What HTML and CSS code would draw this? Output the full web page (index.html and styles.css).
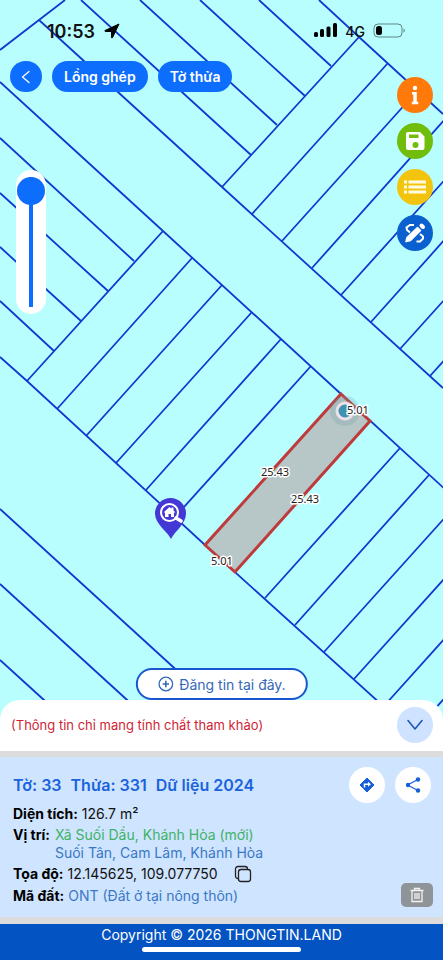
FILE: index.html
```html
<!DOCTYPE html>
<html lang="vi">
<head>
  <meta charset="UTF-8" />
  <meta name="viewport" content="width=device-width, initial-scale=1" />
  <title>Thông tin thửa đất</title>
  <link rel="stylesheet" href="styles.css">
</head>
<body>

  <main class="map">
    <svg class="map-canvas" viewBox="0 0 443 720" preserveAspectRatio="xMidYMin slice">
      <!-- block edges -->
      <g class="lines">
        <path d="M0 50L65 0M39 20L222 187L443 388" />
        <path d="M319 0L359 37L443 114M359 37L222 187" />
        <path d="M0 82L163 231L341 394L459 502M163 231L27 381" />
        <path d="M0 357L27 381L205 545L413 733" />
        <path d="M0 509L206 697M0 584L137 709M0 660L55 710" />
      </g>
      <!-- parcels -->
      <g class="lines">
        <path d="M81 0L251 155M140 0L277 125M200 0L305 96M259 0L331 66" />
        <path d="M388 63L252 214M418 90L282 241M447 117L312 268M477 144L341 295M506 171L371 322M536 198L400 349M566 225L430 376" />
        <path d="M0 138L134 261M0 193L108 291M0 247L81 321M0 301L54 351" />
        <path d="M192 258L57 409M222 285L86 436M252 312L116 463M281 339L146 490M311 366L175 517" />
        <path d="M400 448L265 598M429 475L295 625M459 502L324 652M488 530L354 679M518 557L384 706M548 584L413 733" />
      </g>
      <path class="parcel" d="M341 394L370 421L235 572L205 545Z" />
      <circle cx="345" cy="411" r="15" fill="#6fa0ac" opacity=".25" />
      <circle cx="345" cy="411" r="8" fill="#3f92b0" stroke="#ecdfe8" stroke-width="3" />
      <g class="lengths">
        <text x="358" y="414">5.01</text>
        <text x="275" y="476">25.43</text>
        <text x="305" y="503">25.43</text>
        <text x="222" y="565">5.01</text>
      </g>
      <!-- pin -->
      <path d="M171 539C167 531 155 524 155 513.500A15.500 15.500 0 0 1 186 513.500C186 524 175 531 171 539Z" fill="#4338d6" />
      <circle cx="169.500" cy="512.500" r="8.500" fill="none" stroke="#fff" stroke-width="2" />
      <path d="M176 518L181 521" stroke="#fff" stroke-width="3.500" stroke-linecap="round" />
      <path d="M163.500 512.500L169.500 507L171.500 508.800V507.500H173.500V510.600L175.500 512.500H174V517H171V514H168.500V517H165V512.500Z" fill="#fff" />
    </svg>

    <header class="top">
      <div class="status">
        <span class="clock">10:53</span>
        <svg class="arrow" width="16" height="16" viewBox="0 0 16 16"><path d="M15 1L1 7.500C0.500 8 1 8.500 1.500 8.500H7.500V14.500C7.500 15 8.200 15.300 8.600 14.500Z" stroke="#000" stroke-linejoin="round" /></svg>
        <svg class="signal" width="24" height="16" viewBox="0 0 24 16">
          <rect x="0" y="9" width="4" height="5" rx="1.500" />
          <rect x="6" y="6" width="4" height="8" rx="1.500" />
          <rect x="12.500" y="3.500" width="4" height="10.500" rx="1.500" />
          <rect x="19" y="0" width="4" height="14" rx="1.500" />
        </svg>
        <span class="network">4G</span>
        <svg width="32" height="16" viewBox="0 0 32 16">
          <rect x="1" y="1" width="28" height="13" rx="4" fill="none" stroke="#5f8585" />
          <rect x="3" y="3" width="6" height="9" rx="2.500" />
          <path d="M30.500 5.500C32.200 6 32.200 9 30.500 9.500Z" fill="#5f8585" />
        </svg>
      </div>
      <nav class="actions">
        <button class="back" aria-label="Quay lại">
          <svg width="16" height="16" viewBox="0 0 16 16" fill="none" stroke="#fff" stroke-width="1.300" stroke-linecap="round" stroke-linejoin="round"><path d="M11 2.500L4.500 8L11 13.500" /></svg>
        </button>
        <button class="chip">Lồng ghép</button>
        <button class="chip">Tờ thửa</button>
      </nav>
    </header>

    <div class="opacity-box">
      <input type="range" min="0" max="100" value="0" aria-label="Độ mờ">
    </div>

    <div class="tools">
      <button class="tool orange" aria-label="Thông tin">
        <svg width="24" height="24" viewBox="0 0 24 24" fill="#fff"><circle cx="12" cy="5" r="2.200" /><path d="M9 9H13.800V18.800H15.300V21.300H8.800V18.800H10.300V11.500H9Z" /></svg>
      </button>
      <button class="tool green" aria-label="Lưu">
        <svg width="24" height="24" viewBox="0 0 24 24" fill="#fff"><path fill-rule="evenodd" d="M5 3H17L21.500 7.500V19A2 2 0 0 1 19.500 21H5A2 2 0 0 1 3 19V5A2 2 0 0 1 5 3ZM6 5.500V9H15.500V5.500ZM12.500 13A3 3 0 1 0 12.500 19A3 3 0 1 0 12.500 13Z" /></svg>
      </button>
      <button class="tool yellow" aria-label="Danh sách">
        <svg width="24" height="24" viewBox="0 0 24 24" fill="#fffbe0"><path d="M1 5.500H4V8.500H1ZM5.500 5.500H23V8.500H5.500ZM1 10.500H4V13.500H1ZM5.500 10.500H23V13.500H5.500ZM1 15.500H4V18.500H1ZM5.500 15.500H23V18.500H5.500Z" /></svg>
      </button>
      <button class="tool blue" aria-label="Vẽ">
        <svg width="24" height="24" viewBox="0 0 24 24" fill="none" stroke="#fff" stroke-width="2">
          <path d="M11 4H7L3.500 6.500L4 9L7 11.500M17 13L20 15.500V17.500L17 20.500H13.500" />
          <path d="M3 20.500L4 16.500L14.500 6.500L17.500 9.500L7.500 19.500Z" fill="#fff" stroke-width="1.500" stroke-linejoin="round" />
          <path d="M18.500 4.500L20 6" stroke-width="4" stroke-linecap="round" />
        </svg>
      </button>
    </div>

    <button class="post">
      <svg width="16" height="16" viewBox="0 0 16 16" fill="none" stroke="#3468b8" stroke-width="1.300"><circle cx="8" cy="8" r="6.800" /><path d="M8 4.800V11.200M4.800 8H11.200" stroke-width="1.600" /></svg>
      Đăng tin tại đây.
    </button>
  </main>

  <section class="sheet">
    <div class="notice">
      <p>(Thông tin chỉ mang tính chất tham khảo)</p>
      <button class="round pale" aria-label="Thu gọn">
        <svg width="20" height="20" viewBox="0 0 20 20" fill="none" stroke="#1c58b8" stroke-width="1.600" stroke-linecap="round" stroke-linejoin="round"><path d="M3 5.500L10 14L17 5.500" /></svg>
      </button>
    </div>

    <div class="info">
      <div class="info-head">
        <h2><span>Tờ: 33</span><span>Thửa: 331</span><span>Dữ liệu 2024</span></h2>
        <button class="round" aria-label="Chỉ đường">
          <svg width="16" height="16" viewBox="0 0 16 16"><path d="M8 1L15 8L8 15L1 8Z" fill="#1560d8" stroke="#1560d8" stroke-linejoin="round" /><path d="M5.500 10.500V7.300H9.500" fill="none" stroke="#fff" stroke-width="1.500" /><path d="M9 4.800L12 7.300L9 9.800Z" fill="#fff" /></svg>
        </button>
        <button class="round" aria-label="Chia sẻ">
          <svg width="16" height="16" viewBox="0 0 16 16" fill="#1560d8"><path d="M13 2.500L2.500 8L13 13.500" fill="none" stroke="#1560d8" stroke-width="1.200" /><circle cx="13" cy="2.500" r="2.200" /><circle cx="3" cy="8" r="2.200" /><circle cx="13" cy="13.500" r="2.200" /></svg>
        </button>
      </div>
      <div class="row"><strong>Diện tích:</strong> 126.7 m²</div>
      <div class="row place">
        <strong>Vị trí:</strong>
        <div>
          <div class="new">Xã Suối Dầu, Khánh Hòa (mới)</div>
          <div class="old">Suối Tân, Cam Lâm, Khánh Hòa</div>
        </div>
      </div>
      <div class="row coords">
        <span><strong>Tọa độ:</strong> 12.145625, 109.077750</span>
        <button class="copy" aria-label="Sao chép">
          <svg width="18" height="18" viewBox="0 0 18 18" fill="none" stroke="#222" stroke-width="1.300"><rect x="4.500" y="4.500" width="12" height="12" rx="2.500" /><path d="M4.500 13.500H4A2.500 2.500 0 0 1 1.500 11V4A2.500 2.500 0 0 1 4 1.500H11A2.500 2.500 0 0 1 13.500 4V4.500" /></svg>
        </button>
      </div>
      <div class="row"><strong>Mã đất:</strong> <span class="old">ONT (Đất ở tại nông thôn)</span></div>
      <button class="trash" aria-label="Xóa">
        <svg width="16" height="16" viewBox="0 0 16 16" fill="none" stroke="#f2f2f2" stroke-width="1.300"><path d="M1.500 3.500H14.500M5.500 3.500V1.500H10.500V3.500M3 3.500V14.500H13V3.500M6 6V12M8 6V12M10 6V12" /></svg>
      </button>
    </div>
  </section>

  <footer>
    <div>Copyright © 2026 THONGTIN.LAND</div>
    <div class="home-bar"></div>
  </footer>

</body>
</html>
```
FILE: styles.css
```css
* {
  box-sizing: border-box;
}

body {
  margin: 0;
  min-height: 100vh;
  display: flex;
  flex-direction: column;
  font-family: Inter, sans-serif;
  font-size: 14px;
  color: #111;
  background-color: #b9feff;
}

button {
  display: flex;
  align-items: center;
  justify-content: center;
  padding: 0;
  border: none;
  font-family: inherit;
  cursor: pointer;
}

svg {
  display: block;
  flex-shrink: 0;
}

/* map */
.map {
  position: relative;
  flex: 1;
  min-height: 500px;
  overflow: hidden;
}

.map-canvas {
  position: absolute;
  inset: 0;
  width: 100%;
  height: 100%;
}

.lines {
  fill: none;
  stroke: #1238d0;
  stroke-width: 1.8;
}

.parcel {
  fill: #b7c6c6;
  stroke: #bf3b3b;
  stroke-width: 3;
}

.lengths {
  font-family: "Noto Sans", sans-serif;
  font-size: 11px;
  text-anchor: middle;
  fill: #222;
  stroke: #fff;
  stroke-width: 3;
  stroke-linejoin: round;
  paint-order: stroke;
}

.top {
  position: relative;
  padding: 20px 10px 0;
}

.status {
  display: flex;
  align-items: center;
  height: 22px;
  padding: 0 28px 0 37px;
}

.clock {
  font-size: 18px;
  font-weight: 600;
}

.arrow {
  margin-left: 9px;
}

.signal {
  margin-left: auto;
}

.network {
  margin: 0 8px 0 7px;
  font-size: 14px;
  font-weight: 500;
}

.actions {
  display: flex;
  gap: 10px;
  margin-top: 19px;
}

.back,
.chip {
  height: 31px;
  border-radius: 16px;
  background-color: #0d6efd;
  color: white;
}

.back {
  width: 32px;
}

.chip {
  padding: 0 12px;
  font-size: 14px;
  font-weight: 600;
}

.opacity-box {
  position: absolute;
  top: 170px;
  left: 16px;
  width: 30px;
  height: 144px;
  padding: 7px 1px;
  border-radius: 15px;
  background-color: white;
}

.opacity-box input {
  appearance: none;
  writing-mode: vertical-lr;
  width: 28px;
  height: 130px;
  margin: 0;
  background: linear-gradient(#0d6efd, #0d6efd) center / 4px 100% no-repeat;
}

.opacity-box input::-webkit-slider-thumb {
  appearance: none;
  width: 28px;
  height: 28px;
  border-radius: 50%;
  background-color: #0d6efd;
}

.tools {
  position: absolute;
  top: 77px;
  right: 10px;
  display: flex;
  flex-direction: column;
  gap: 10px;
}

.tool {
  width: 36px;
  height: 36px;
  border-radius: 50%;
}

.orange {
  background-color: #ff7a0a;
}

.green {
  background-color: #70bd0c;
}

.yellow {
  background-color: #f3c40e;
}

.blue {
  background-color: #0b60cf;
}

.post {
  position: absolute;
  bottom: 20px;
  left: 50%;
  transform: translateX(-50%);
  gap: 6px;
  height: 32px;
  padding: 0 20px;
  border: 2px solid #1857d0;
  border-radius: 16px;
  background-color: white;
  color: #3468b8;
  font-size: 14px;
  white-space: nowrap;
}

/* bottom sheet */
.sheet {
  position: relative;
  margin-top: -20px;
  border-radius: 20px 20px 0 0;
  background-color: white;
}

.notice {
  display: flex;
  align-items: center;
  justify-content: space-between;
  padding: 7px 10px 8px 11px;
}

.notice p {
  margin: 0;
  font-size: 13px;
  color: #cf1f35;
}

.round {
  flex-shrink: 0;
  width: 36px;
  height: 36px;
  border-radius: 50%;
  background-color: white;
}

.pale {
  background-color: #cfe2ff;
}

.info {
  position: relative;
  padding: 10px 12px 10px 13px;
  border-top: 6px solid #dcdcdc;
  border-bottom: 7px solid #dcdcdc;
  background-color: #cfe4ff;
}

.info-head {
  display: flex;
  align-items: center;
  gap: 10px;
}

.info-head h2 {
  display: flex;
  gap: 9px;
  margin: 0 auto 0 0;
  font-size: 16px;
  font-weight: 600;
  color: #1a63dc;
}

.row {
  line-height: 22px;
}

.row strong {
  font-weight: 700;
  color: #000;
}

.place {
  display: flex;
  gap: 5px;
  padding: 1px 0;
}

.place div {
  line-height: 18px;
}

.place strong {
  line-height: 18px;
}

.new {
  color: #3fb268;
}

.old {
  color: #3a78c6;
}

.coords {
  display: flex;
  align-items: center;
  gap: 16px;
}

.copy {
  background: none;
}

.trash {
  position: absolute;
  right: 10px;
  bottom: 10px;
  width: 32px;
  height: 24px;
  border-radius: 5px;
  background-color: #8f9499;
}

footer {
  padding: 2px 0 8px;
  background-color: #0453c2;
  color: white;
  line-height: 18px;
  text-align: center;
}

.home-bar {
  width: 36%;
  height: 5px;
  margin: 3px auto 0;
  border-radius: 3px;
  background-color: white;
}
```
